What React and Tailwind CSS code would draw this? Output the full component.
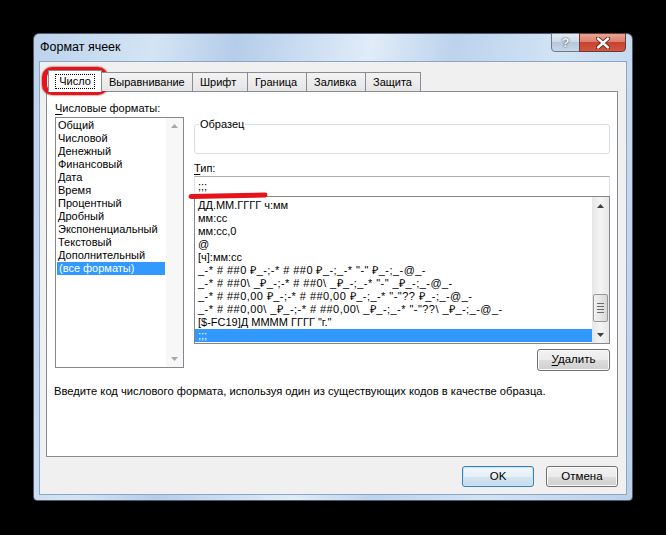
import React from "react";

const font = "font-['Segoe_UI','Liberation_Sans',sans-serif]";

const leftItems = [
  "Общий",
  "Числовой",
  "Денежный",
  "Финансовый",
  "Дата",
  "Время",
  "Процентный",
  "Дробный",
  "Экспоненциальный",
  "Текстовый",
  "Дополнительный",
  "(все форматы)",
];

const rightItems = [
  "ДД.ММ.ГГГГ ч:мм",
  "мм:сс",
  "мм:сс,0",
  "@",
  "[ч]:мм:сс",
  '_-* # ##0 ₽_-;-* # ##0 ₽_-;_-* "-" ₽_-;_-@_-',
  '_-* # ##0\\ _₽_-;-* # ##0\\ _₽_-;_-* "-" _₽_-;_-@_-',
  '_-* # ##0,00 ₽_-;-* # ##0,00 ₽_-;_-* "-"?? ₽_-;_-@_-',
  '_-* # ##0,00\\ _₽_-;-* # ##0,00\\ _₽_-;_-* "-"??\\ _₽_-;_-@_-',
  '[$-FC19]Д ММММ ГГГГ "г."',
  ";;;",
];

function Tri({ down, color = "#404040" }) {
  return (
    <svg width="7" height="4" viewBox="0 0 7 4">
      {down ? (
        <path d="M0 0 L7 0 L3.5 4 Z" fill={color} />
      ) : (
        <path d="M0 4 L7 4 L3.5 0 Z" fill={color} />
      )}
    </svg>
  );
}

function Btn({ children, className = "", def = false }) {
  return (
    <div
      className={
        "flex items-center justify-center rounded-[3px] border text-[11.5px] text-black " +
        (def
          ? "border-[#3c7fb1] bg-[linear-gradient(#f1f7fb_0%,#e5eff7_50%,#d4e5f1_50%,#c6dcec_100%)] shadow-[inset_0_0_0_1px_#c8e4f8] "
          : "border-[#707070] bg-[linear-gradient(#f2f2f2_0%,#ebebeb_50%,#dddddd_50%,#cfcfcf_100%)] shadow-[inset_0_0_0_1px_#fbfbfb] ") +
        className
      }
    >
      {children}
    </div>
  );
}

const tabs = ["Выравнивание", "Шрифт", "Граница", "Заливка", "Защита"];
const tabW = ["w-[92px]", "w-[56px]", "w-[60px]", "w-[60px]", "w-[56px]"];

export default function App() {
  return (
    <div className={"relative h-[535px] w-[666px] overflow-hidden bg-black pl-[33px] pt-[33px] " + font}>
      {/* window */}
      <div className="flex h-[468px] w-[600px] flex-col rounded-t-[6px] rounded-b-[4px] border border-[#4a5a6e] bg-[linear-gradient(100deg,#bcd3ec_0%,#d4e4f4_18%,#b5cde9_30%,#cfe0f3_42%,#e1ecf8_50%,#bcd3ec_62%,#d2e3f4_78%,#bad1eb_100%)] px-[5px] pb-[5px]">
        {/* title bar */}
        <div className="flex h-[27px] items-start">
          <div className="self-center pl-[1px] text-[12.5px] text-black">Формат ячеек</div>
          <div className="flex-1" />
          <div className="-mt-px mr-px flex">
            <div className="flex h-[19px] w-[29px] items-center justify-center rounded-bl-[4px] border border-[#6b7a90] bg-[linear-gradient(#e4ecf5_0%,#cbd8e8_50%,#b6c7dc_50%,#c9d6e6_100%)]">
              <span className="text-[13px] font-bold leading-none text-[#f4f6f9] [text-shadow:0_0_1px_#4b5a70,0_0_2px_#4b5a70]">?</span>
            </div>
            <div className="-ml-px flex h-[19px] w-[47px] items-center justify-center rounded-br-[4px] border border-[#6b3a34] bg-[linear-gradient(#eaa595_0%,#dc7f6d_45%,#c7422f_50%,#d0573f_100%)]">
              <svg width="14" height="12" viewBox="0 0 14 12">
                <path d="M2 1.5 L12 10.5 M12 1.5 L2 10.5" stroke="#5a1e16" strokeWidth="4.2" strokeLinecap="round" />
                <path d="M2 1.5 L12 10.5 M12 1.5 L2 10.5" stroke="#ffffff" strokeWidth="2.4" strokeLinecap="round" />
              </svg>
            </div>
          </div>
        </div>

        {/* client */}
        <div className="flex h-[434px] w-[588px] flex-col border border-[#8ea5c2] bg-[#f0f0f0]">
          {/* tab strip */}
          <div className="relative z-10 ml-[8px] mt-[7px] flex h-[22px] items-end">
            <div className="relative -mb-px flex h-[22px] w-[54px] items-center justify-center border border-b-0 border-[#898c95] bg-white">
              <span className="border border-dotted border-black px-[3px] text-[11px] leading-[13px] text-black">Число</span>
            </div>
            {tabs.map((t, i) => (
              <div
                key={t}
                className={
                  "flex h-[19px] items-center -ml-px border border-b-0 border-[#898c95] bg-[linear-gradient(#f3f3f3,#e5e5e5)] pl-[7px] text-[11px] text-black " +
                  tabW[i] +
                  (i === 0 ? " -ml-[2px] pl-[6px]" : "")
                }
              >
                {t}
              </div>
            ))}
          </div>

          {/* panel */}
          <div className="ml-[6px] flex h-[366px] w-[572px] flex-col border border-[#898c95] bg-white pl-[8px] pt-[9px] text-[11px] text-black">
            <div className="flex">
              {/* left column */}
              <div className="flex w-[129px] flex-col">
                <div className="h-[14px] leading-[14px]">
                  <span className="underline underline-offset-2">Ч</span>исловые форматы:
                </div>
                <div className="mt-[2px] flex h-[251px] border border-[#828790]">
                  <div className="flex-1 pt-[1px]">
                    {leftItems.map((it, i) => (
                      <div
                        key={it}
                        className={
                          "h-[13px] whitespace-nowrap pl-[2px] leading-[13px] " +
                          (i === leftItems.length - 1 ? "mx-[1px] bg-[#3399ff] pl-[1px] text-white" : "")
                        }
                      >
                        {it}
                      </div>
                    ))}
                  </div>
                  <div className="flex w-[17px] flex-col items-center justify-between bg-[#f7f7f7] py-[6px]">
                    <Tri color="#a8a8a8" />
                    <Tri down color="#a8a8a8" />
                  </div>
                </div>
              </div>

              {/* right column */}
              <div className="ml-[10px] flex w-[416px] flex-col">
                <div className="relative mt-[23px] h-[30px] rounded-[3px] border border-[#d5dfe5]">
                  <span className="absolute left-[4px] top-[-8px] bg-white px-[1px] leading-[14px]">Образец</span>
                </div>
                <div className="mt-[7px] h-[14px] leading-[14px]">
                  <span className="underline underline-offset-2">Т</span>ип:
                </div>
                <div className="mt-[1px] flex h-[21px] items-center border border-[#abadb3] border-x-[#dbdfe6] pl-[3px]">
                  ;;;
                </div>
                <div className="-mt-px flex h-[148px] border border-[#828790]">
                  <div className="flex-1 overflow-hidden pt-[2px]">
                    {rightItems.map((it, i) => (
                      <div
                        key={i}
                        className={
                          "h-[13px] whitespace-pre pl-[3px] leading-[13px] " +
                          (i >= 5 && i <= 8 ? "tracking-[0.45px] " : "") +
                          (i === rightItems.length - 1 ? "bg-[#3399ff] text-white" : "")
                        }
                      >
                        {it}
                      </div>
                    ))}
                  </div>
                  <div className="flex w-[17px] flex-col items-center bg-[linear-gradient(90deg,#e6e6e6,#f4f4f4,#e6e6e6)]">
                    <div className="flex h-[17px] items-center justify-center">
                      <Tri />
                    </div>
                    <div className="flex-1 w-full px-[1px] pt-[80px]">
                      <div className="flex h-[28px] w-full flex-col items-center justify-center gap-[2px] rounded-[2px] border border-[#979797] bg-[linear-gradient(90deg,#f2f2f2,#e6e6e6,#d8d8d8)]">
                        <div className="h-px w-[7px] bg-[#6a6a6a]" />
                        <div className="h-px w-[7px] bg-[#6a6a6a]" />
                        <div className="h-px w-[7px] bg-[#6a6a6a]" />
                        <div className="h-px w-[7px] bg-[#6a6a6a]" />
                      </div>
                    </div>
                    <div className="flex h-[17px] items-center justify-center">
                      <Tri down />
                    </div>
                  </div>
                </div>
                <div className="mt-[5px] flex justify-end">
                  <Btn className="h-[22px] w-[73px]">
                    <span>
                      <span className="underline underline-offset-2">У</span>далить
                    </span>
                  </Btn>
                </div>
              </div>
            </div>
            <div className="-ml-px mt-[13px] h-[14px] text-[11.2px] leading-[14px]">
              Введите код числового формата, используя один из существующих кодов в качестве образца.
            </div>
          </div>

          {/* buttons */}
          <div className="mt-[9px] flex justify-end gap-[12px] pr-[8px]">
            <Btn def className="h-[21px] w-[72px]">OK</Btn>
            <Btn className="h-[21px] w-[72px]">Отмена</Btn>
          </div>
        </div>
      </div>

      {/* red annotations */}
      <div className="pointer-events-none absolute left-[42px] top-[67px] h-[28px] w-[66px] rounded-[10px] border-[5px] border-[#e3141a] shadow-[0_0_2px_#7a0000]" />
      <svg className="pointer-events-none absolute left-0 top-0" width="666" height="535">
        <path d="M191 196.5 L265 195" stroke="#e3141a" strokeWidth="5" strokeLinecap="round" />
      </svg>
    </div>
  );
}
